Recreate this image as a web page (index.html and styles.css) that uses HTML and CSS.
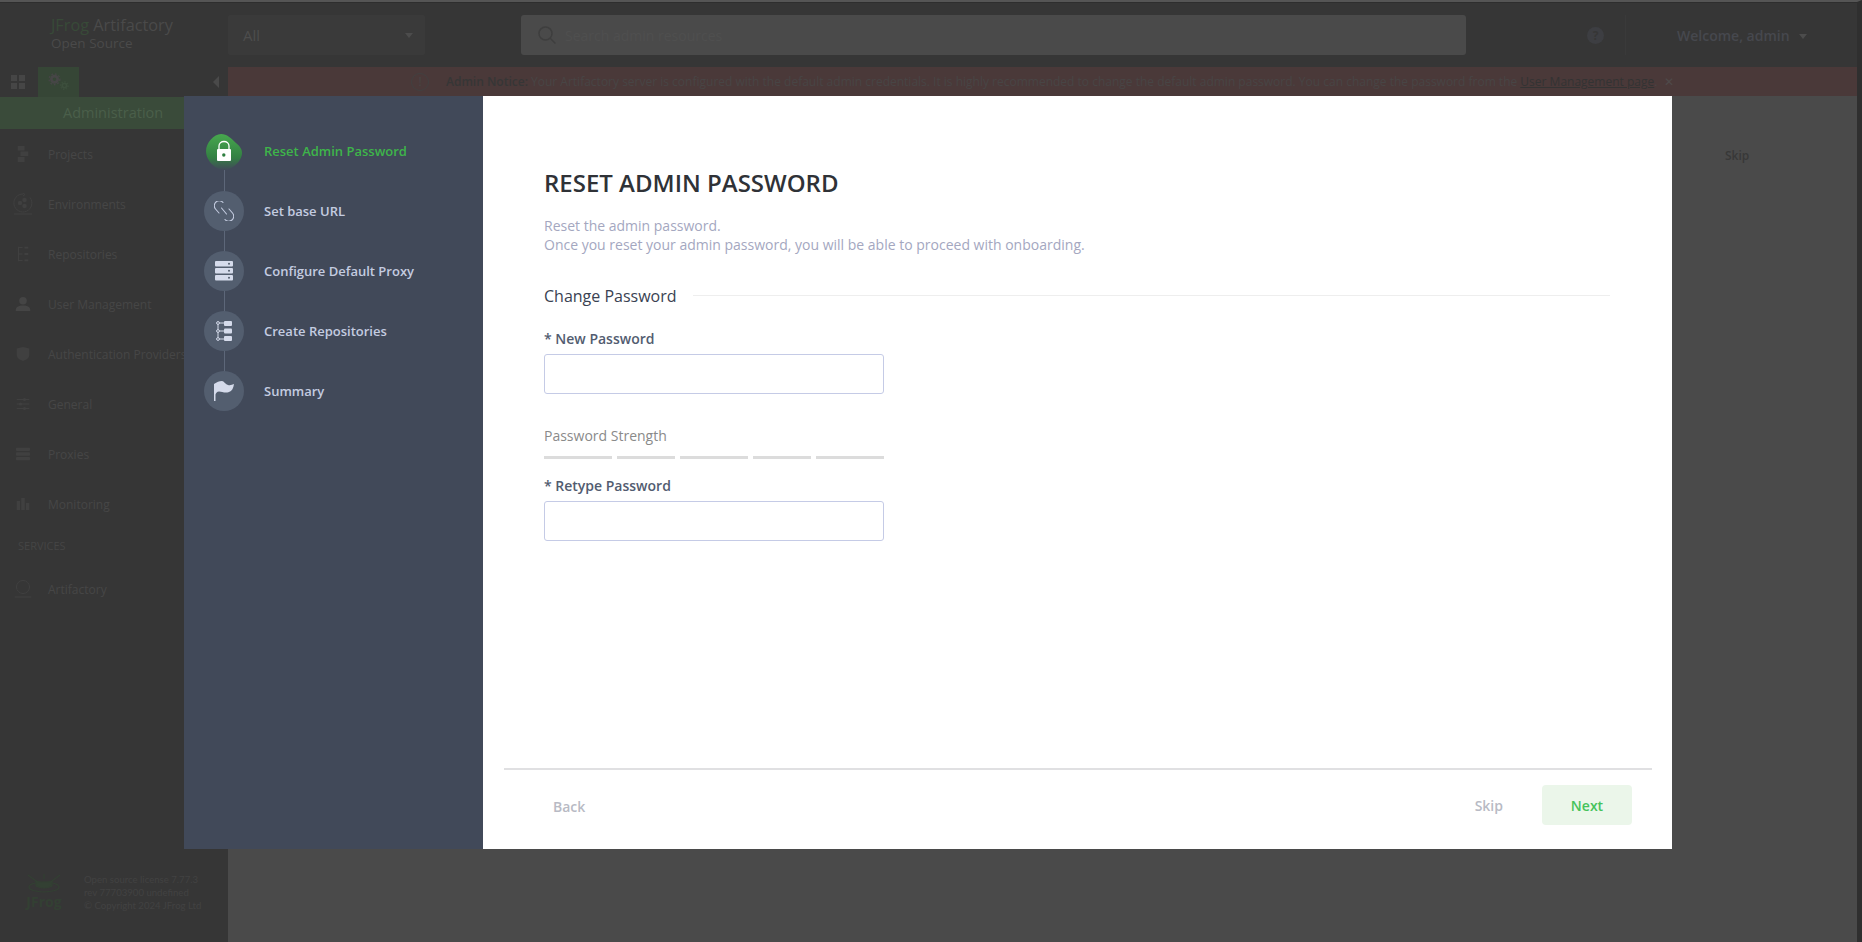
FILE: index.html
```html
<!DOCTYPE html>
<html lang="en">
<head>
    <meta charset="UTF-8">
    <meta name="viewport" content="width=device-width, initial-scale=1.0">
    <title>JFrog Artifactory</title>
    <link rel="stylesheet" href="styles.css">
</head>
<body>
    <div class="app">
        <!-- top bar -->
        <header class="topbar">
            <div class="brand">
                <div class="brand-name"><span class="brand-jfrog">JFrog</span> Artifactory</div>
                <div class="brand-sub">Open Source</div>
            </div>
            <div class="package-select">
                <span>All</span>
                <i class="caret"></i>
            </div>
            <div class="search">
                <svg class="search-icon" width="20" height="20" viewBox="0 0 20 20" fill="none" stroke="#3e3e3e" stroke-width="1.5"><circle cx="8.5" cy="8.5" r="6.5"/><path d="M13.5 13.5l5 5"/></svg>
                <span>Search admin resources</span>
            </div>
            <div class="help">?</div>
            <div class="user">
                <span>Welcome, admin</span>
                <i class="caret caret-user"></i>
            </div>
        </header>

        <div class="body-row">
            <!-- left menu -->
            <aside class="sidebar">
                <div class="tabs">
                    <div class="tab">
                        <svg width="14" height="14" viewBox="0 0 14 14" fill="#464646"><rect width="6" height="6"/><rect x="8" width="6" height="6"/><rect y="8" width="6" height="6"/><rect x="8" y="8" width="6" height="6"/></svg>
                    </div>
                    <div class="tab tab-active">
                        <svg width="22" height="18" viewBox="0 0 24 20" fill="none"><circle cx="7" cy="7" r="3.500" stroke="#464646" stroke-width="3"/><circle cx="7" cy="7" r="6" stroke="#464646" stroke-width="1.500" stroke-dasharray="2 2"/><circle cx="18" cy="14" r="2.500" stroke="#3d4f3d" stroke-width="2"/><circle cx="18" cy="14" r="4.200" stroke="#3d4f3d" stroke-width="1.200" stroke-dasharray="1.600 1.600"/></svg>
                    </div>
                    <i class="collapse"></i>
                </div>
                <div class="section-title">Administration</div>
                <nav class="nav">
                    <div class="nav-item">
                        <svg width="11" height="16" viewBox="0 0 11 16" fill="#404040"><rect x="0" y="0" width="7" height="4.500"/><rect x="3" y="5.500" width="8" height="4.500"/><rect x="0" y="11" width="7" height="5"/></svg>
                        <span>Projects</span>
                    </div>
                    <div class="nav-item">
                        <svg width="20" height="22" viewBox="0 0 20 22" fill="none" stroke="#404040" stroke-width="1"><path d="M10 1a9 9 0 1 0 7 3.500"/><path d="M1 21h18"/><path d="M10 0l2 1.500-2 1.500"/><g fill="#404040" stroke="none"><circle cx="7" cy="10" r="2.200"/><circle cx="11.500" cy="7" r="2.200"/><circle cx="11.500" cy="13" r="2.200"/></g></svg>
                        <span>Environments</span>
                    </div>
                    <div class="nav-item">
                        <svg width="11" height="15" viewBox="0 0 11 15" fill="none" stroke="#404040" stroke-width="1"><path d="M1 0v15M1 1h4M1 7.500h4M1 14h4"/><path d="M7 1h4M7 7.500h4M7 14h4" stroke-width="2"/></svg>
                        <span>Repositories</span>
                    </div>
                    <div class="nav-item">
                        <svg width="15" height="14" viewBox="0 0 15 14" fill="#454545"><circle cx="7.500" cy="3.800" r="3.800"/><path d="M0 14c0-4 3-5.500 7.500-5.500S15 10 15 14z"/></svg>
                        <span>User Management</span>
                    </div>
                    <div class="nav-item">
                        <svg width="13" height="14" viewBox="0 0 13 14" fill="#404040"><path d="M6.500 0l6.500 1.500V7c0 4-3.500 6-6.500 7C3.500 13 0 11 0 7V1.500z"/></svg>
                        <span>Authentication Providers</span>
                    </div>
                    <div class="nav-item">
                        <svg width="13" height="12" viewBox="0 0 13 12" fill="#404040"><path d="M0 1h13v1H0zM0 5.500h13v1H0zM0 10h13v1H0z"/><circle cx="8" cy="1.500" r="1.500"/><circle cx="4" cy="6" r="1.500"/><circle cx="8" cy="10.500" r="1.500"/></svg>
                        <span>General</span>
                    </div>
                    <div class="nav-item">
                        <svg width="14" height="13" viewBox="0 0 14 13" fill="#404040"><rect width="14" height="3.500" rx="1"/><rect y="4.700" width="14" height="3.500" rx="1"/><rect y="9.500" width="14" height="3.500" rx="1"/></svg>
                        <span>Proxies</span>
                    </div>
                    <div class="nav-item">
                        <svg width="13" height="12" viewBox="0 0 13 12" fill="#404040"><rect y="3" width="3.500" height="9"/><rect x="4.700" width="3.500" height="12"/><rect x="9.500" y="5" width="3.500" height="7"/></svg>
                        <span>Monitoring</span>
                    </div>
                    <div class="nav-heading">SERVICES</div>
                    <div class="nav-item nav-item-service">
                        <svg width="17" height="18" viewBox="0 0 17 18" fill="none" stroke="#404040" stroke-width="1"><circle cx="8.500" cy="7" r="6.500"/><path d="M0 17h17"/></svg>
                        <span>Artifactory</span>
                    </div>
                </nav>
                <div class="side-footer">
                    <div class="frog-logo">
                        <svg width="36" height="22" viewBox="0 0 36 20" fill="none" stroke="#334033" stroke-width="1.200"><path d="M2 1l8 6M34 1l-8 6M18 0v5"/><path d="M10 7q8 3 16 0v5q-8 4-16 0z" fill="#334033"/><ellipse cx="18" cy="13" rx="15" ry="5"/></svg>
                        <span>JFrog</span>
                    </div>
                    <div class="license">
                        <div>Open source license 7.77.3</div>
                        <div>rev 77703900 undefined</div>
                        <div>© Copyright 2024 JFrog Ltd</div>
                    </div>
                </div>
            </aside>

            <main class="main">
                <div class="notice">
                    <span class="notice-icon">!</span>
                    <span class="notice-text"><b>Admin Notice:</b> Your Artifactory server is configured with the default admin credentials. It is highly recommended to change the default admin password. You can change the password from the <u>User Management page</u>.</span>
                    <span class="notice-close">✕</span>
                </div>
                <div class="main-skip">Skip</div>
            </main>
        </div>
    </div>

    <!-- onboarding wizard -->
    <div class="wizard">
        <div class="steps">
            <div class="step step-active">
                <span class="step-icon">
                    <svg width="36" height="36" viewBox="0 0 36 36">
                        <defs>
                            <linearGradient id="blob" x1="0" y1="0" x2="0" y2="1">
                                <stop offset="0" stop-color="#47a84e"/>
                                <stop offset="0.65" stop-color="#338043"/>
                                <stop offset="1" stop-color="#414959"/>
                            </linearGradient>
                        </defs>
                        <path d="M15 0C21 0 25 4 30 9C35 13 36 16 36 19C36 27 26 36 18 36C10 36 0 27 0 17C0 9 8 0 15 0z" fill="url(#blob)"/>
                        <path d="M13 16v-4a5 4.500 0 0 1 10 0v4" fill="none" stroke="#fff" stroke-width="1.300"/>
                        <rect x="11" y="15" width="14" height="12" rx="1" fill="#fff"/>
                        <circle cx="17.800" cy="21" r="1.700" fill="#2f7f40"/>
                    </svg>
                </span>
                <span class="step-label">Reset Admin Password</span>
            </div>
            <div class="step">
                <span class="step-icon step-circle">
                    <svg width="20" height="20" viewBox="0 0 20 20" fill="none" stroke="#c4cce0" stroke-width="1.100" stroke-linecap="round"><path d="M9 1.500A4.800 4.800 0 0 0 1.500 8L5 12"/><path d="M11 18.500A4.800 4.800 0 0 0 18.500 12L15 8"/><path d="M7.500 7L12.500 13"/></svg>
                </span>
                <span class="step-label">Set base URL</span>
            </div>
            <div class="step">
                <span class="step-icon step-circle">
                    <svg width="18" height="20" viewBox="0 0 18 20" fill="#d5dbeb"><rect width="18" height="5.500" rx="1"/><rect y="7" width="18" height="5.500" rx="1"/><rect y="14" width="18" height="5.500" rx="1"/><g fill="#535e6f"><circle cx="14" cy="2.700" r="1"/><circle cx="14" cy="9.700" r="1"/><circle cx="14" cy="16.700" r="1"/></g></svg>
                </span>
                <span class="step-label">Configure Default Proxy</span>
            </div>
            <div class="step">
                <span class="step-icon step-circle">
                    <svg width="16" height="20" viewBox="0 0 16 20" fill="none" stroke="#d5dbeb" stroke-width="1"><path d="M2 2v16M2 2h6M2 10h6M2 18h6"/><circle cx="2" cy="2" r="1.400" fill="#535e6f"/><circle cx="2" cy="10" r="1.400" fill="#535e6f"/><circle cx="2" cy="18" r="1.400" fill="#535e6f"/><g fill="#d5dbeb" stroke="none"><rect x="8" y="0" width="8" height="5" rx="1"/><rect x="8" y="7.500" width="8" height="5" rx="1"/><rect x="8" y="15" width="8" height="5" rx="1"/></g></svg>
                </span>
                <span class="step-label">Create Repositories</span>
            </div>
            <div class="step">
                <span class="step-icon step-circle">
                    <svg width="20" height="20" viewBox="0 0 20 20"><path d="M0 3C3 1 5 0 8 0C10 0 11 3 14 4C16 4.500 18 4 20 3C19.500 7 18 10 15 11C11 12.500 8 10.500 5 10.500C3 10.500 2 12 1.500 13.500V20H0z" fill="#d5dbeb"/></svg>
                </span>
                <span class="step-label">Summary</span>
            </div>
        </div>

        <div class="wizard-content">
            <div class="wizard-form">
                <h1>RESET ADMIN PASSWORD</h1>
                <p class="intro">Reset the admin password.<br>Once you reset your admin password, you will be able to proceed with onboarding.</p>
                <div class="form-section">
                    <span>Change Password</span>
                    <i></i>
                </div>
                <label class="field-label label-new">* New Password</label>
                <input class="field" type="password">
                <div class="strength-label">Password Strength</div>
                <div class="strength-bars">
                    <i class="bar-wide"></i>
                    <i class="bar-narrow"></i>
                    <i class="bar-wide"></i>
                    <i class="bar-narrow"></i>
                    <i class="bar-wide"></i>
                </div>
                <label class="field-label label-retype">* Retype Password</label>
                <input class="field" type="password">
            </div>
            <div class="wizard-footer">
                <button class="btn btn-back">Back</button>
                <button class="btn btn-skip">Skip</button>
                <button class="btn btn-next">Next</button>
            </div>
        </div>
    </div>
</body>
</html>
```

FILE: styles.css
```css
/* general */
html, body {
    margin: 0;
    height: 100%;
    overflow: hidden;
}

body {
    font-family: "Open Sans", sans-serif;
    font-size: 13px;
    background-color: #4a4a4a;
}

.app {
    display: flex;
    flex-direction: column;
    height: 100%;
    border-top: 2px solid #555;
    border-right: 5px solid #2f2f2f;
    box-sizing: border-box;
}

.caret {
    display: block;
    width: 0;
    height: 0;
    border-left: 4px solid transparent;
    border-right: 4px solid transparent;
    border-top: 5px solid #4c4c4c;
}

/* top bar */
.topbar {
    display: flex;
    align-items: center;
    height: 64px;
    border-top: 1px solid #2e2e2e;
    background-color: #363636;
    flex-shrink: 0;
}

.brand {
    width: 177px;
    padding-left: 51px;
    color: #4a4a4a;
}

.brand-name {
    font-size: 16.300px;
    line-height: 20px;
    margin-top: -4px;
}

.brand-jfrog {
    color: #384a38;
}

.brand-sub {
    font-size: 13.500px;
    line-height: 16px;
}

.package-select {
    display: flex;
    justify-content: space-between;
    align-items: center;
    width: 197px;
    height: 40px;
    padding: 0 12px 0 15px;
    box-sizing: border-box;
    background-color: #3a3a3a;
    border-radius: 2px;
    color: #4d4d4d;
    font-size: 15px;
}

.search {
    display: flex;
    align-items: center;
    gap: 8px;
    width: 945px;
    height: 40px;
    margin-left: 96px;
    padding-left: 16px;
    box-sizing: border-box;
    background-color: #4a4a4a;
    border-radius: 3px;
    color: #4f4f4f;
    font-size: 14px;
}

.help {
    width: 17px;
    height: 17px;
    margin-left: 121px;
    border-radius: 50%;
    background-color: #3d3e42;
    color: #363636;
    font-size: 12px;
    font-weight: 700;
    line-height: 17px;
    text-align: center;
}

.user {
    display: flex;
    align-items: center;
    gap: 9px;
    height: 40px;
    margin-left: 21px;
    padding-left: 51px;
    border-left: 1px solid #3a3a3a;
    color: #46484e;
    font-size: 14px;
    font-weight: 600;
}

.caret-user {
    margin-top: 2px;
}

.body-row {
    display: flex;
    flex: 1;
    min-height: 0;
}

/* left menu */
.sidebar {
    display: flex;
    flex-direction: column;
    width: 228px;
    flex-shrink: 0;
    background-color: #363636;
}

.tabs {
    display: flex;
    height: 30px;
    position: relative;
}

.tab {
    display: flex;
    align-items: center;
    justify-content: center;
    width: 36px;
    height: 30px;
    padding-right: 2px;
}

.tab-active {
    width: 41px;
    padding-right: 0;
    background-color: #364636;
}

.collapse {
    position: absolute;
    left: 213px;
    top: 9px;
    width: 0;
    height: 0;
    border-top: 6px solid transparent;
    border-bottom: 6px solid transparent;
    border-right: 6px solid #4a4a4a;
}

.section-title {
    height: 32px;
    padding-left: 63px;
    background-color: #3a4b3a;
    color: #4a5f4a;
    font-size: 14.500px;
    line-height: 32px;
}

.nav {
    flex: 1;
}

.nav-item {
    display: flex;
    align-items: center;
    height: 50px;
    padding-left: 48px;
    position: relative;
    color: #464646;
    font-size: 12px;
    white-space: nowrap;
    overflow: hidden;
}

.nav-item svg {
    position: absolute;
    left: 23px;
    top: 50%;
    transform: translate(-50%, -50%);
}

.nav-heading {
    height: 34px;
    padding-left: 18px;
    color: #454545;
    font-size: 11px;
    line-height: 34px;
}

.nav-item-service {
    height: 52px;
}

.side-footer {
    display: flex;
    gap: 22px;
    height: 72px;
    padding: 3px 0 0 26px;
    box-sizing: border-box;
}

.frog-logo {
    display: flex;
    flex-direction: column;
    align-items: center;
    width: 36px;
    color: #334033;
    font-size: 14px;
    font-weight: 700;
    line-height: 14px;
}

.license {
    color: #424242;
    font-family: Lato, sans-serif;
    font-size: 9.600px;
    line-height: 13px;
    white-space: nowrap;
}

/* main area */
.main {
    flex: 1;
    min-width: 0;
}

.notice {
    display: flex;
    align-items: center;
    height: 29px;
    padding-left: 183px;
    background-color: #4a3939;
    color: #484545;
    font-size: 12px;
    white-space: nowrap;
}

.notice-icon {
    width: 18px;
    height: 18px;
    margin-right: 17px;
    border: 1px solid #424040;
    border-radius: 50%;
    box-sizing: border-box;
    line-height: 16px;
    text-align: center;
}

.notice-text b {
    color: #363636;
    font-weight: 600;
}

.notice-text u {
    color: #333;
}

.notice-close {
    margin-left: 7px;
    color: #4f4a4a;
}

.main-skip {
    margin: 51px 0 0 1497px;
    color: #383838;
    font-size: 12px;
    font-weight: 600;
}

/* wizard */
.wizard {
    position: absolute;
    left: 184px;
    top: 96px;
    display: flex;
    width: 1488px;
    height: 753px;
}

.steps {
    width: 299px;
    padding-top: 25px;
    box-sizing: border-box;
    background-color: #414959;
}

.step {
    display: flex;
    align-items: center;
    height: 60px;
    position: relative;
    color: #c4cce0;
    font-weight: 600;
}

.step:not(:last-child)::after {
    content: "";
    position: absolute;
    left: 40px;
    top: 50%;
    width: 1px;
    height: 60px;
    background-color: #5d6779;
}

.step-icon {
    display: flex;
    align-items: center;
    justify-content: center;
    width: 40px;
    height: 40px;
    margin-left: 20px;
    position: relative;
    z-index: 1;
}

.step-circle {
    border-radius: 50%;
    background-color: #535e6f;
}

.step-label {
    margin-left: 20px;
}

.step-active {
    color: #3eb54a;
}

.step-active svg {
    margin-top: 2px;
}

.wizard-content {
    display: flex;
    flex-direction: column;
    flex: 1;
    background-color: #fff;
}

.wizard-form {
    flex: 1;
    padding: 72px 62px 0 61px;
}

h1 {
    margin: 0;
    color: #2f3237;
    font-size: 24px;
    font-weight: 600;
    line-height: 30px;
}

.intro {
    margin: 18px 0 0;
    color: #a4a7bf;
    font-size: 14px;
    line-height: 19px;
}

.form-section {
    display: flex;
    align-items: center;
    gap: 16px;
    margin-top: 32px;
    color: #3a4252;
    font-size: 16px;
    line-height: 20px;
}

.form-section i {
    flex: 1;
    height: 1px;
    margin-bottom: 2px;
    background-color: #eee;
}

.field-label {
    display: block;
    color: #525c70;
    font-size: 14px;
    font-weight: 600;
    line-height: 18px;
}

.label-new {
    margin: 24px 0 6px;
}

.label-retype {
    margin: 18px 0 6px;
}

.field {
    display: block;
    width: 340px;
    height: 40px;
    padding: 0 10px;
    box-sizing: border-box;
    border: 1px solid #c5cbe6;
    border-radius: 3px;
    background: #fff;
    outline: none;
}

.strength-label {
    margin-top: 33px;
    color: #8a8a8a;
    font-size: 14px;
    line-height: 18px;
}

.strength-bars {
    display: flex;
    gap: 5px;
    margin-top: 11px;
}

.strength-bars i {
    height: 3px;
    background-color: #dcdcdc;
}

.bar-wide {
    width: 68px;
}

.bar-narrow {
    width: 58px;
}

.wizard-footer {
    display: flex;
    align-items: flex-start;
    height: 81px;
    margin: 0 20px 0 21px;
    padding: 15px 20px 0 0;
    box-sizing: border-box;
    border-top: 2px solid #e0e0e2;
}

.btn {
    height: 40px;
    padding: 0;
    border: none;
    background: none;
    color: #b8bac4;
    font-family: "Open Sans", sans-serif;
    font-size: 14px;
    font-weight: 600;
}

.btn-back {
    margin: 1px 0 0 49px;
}

.btn-skip {
    margin-left: auto;
}

.btn-next {
    width: 90px;
    margin-left: 39px;
    border-radius: 4px;
    background-color: #ebf6ea;
    color: #46c35b;
}
```
